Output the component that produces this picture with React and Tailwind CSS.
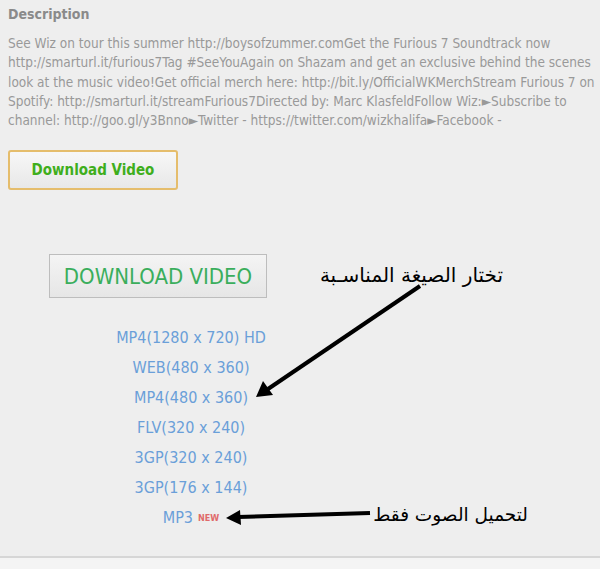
const lines = [
  'See Wiz on tour this summer http://boysofzummer.comGet the Furious 7 Soundtrack now',
  'http://smarturl.it/furious7Tag #SeeYouAgain on Shazam and get an exclusive behind the scenes',
  'look at the music video!Get official merch here: http://bit.ly/OfficialWKMerchStream Furious 7 on',
  'Spotify: http://smarturl.it/streamFurious7Directed by: Marc KlasfeldFollow Wiz:\u25BASubscribe to',
  'channel: http://goo.gl/y3Bnno\u25BATwitter - https://twitter.com/wizkhalifa\u25BAFacebook -',
];

const formats = [
  'MP4(1280 x 720) HD',
  'WEB(480 x 360)',
  'MP4(480 x 360)',
  'FLV(320 x 240)',
  '3GP(320 x 240)',
  '3GP(176 x 144)',
];

export default function App() {
  return (
    <div className="relative w-[600px] h-[569px] overflow-hidden bg-[#eeeeee] font-['DejaVu_Sans_Condensed','Liberation_Sans',sans-serif]">
      <div className="h-[556px] px-2 pt-[5px]">
        <h3 className="text-[14px] leading-[18px] font-bold text-[#8a8a8a]">Description</h3>
        <p className="mt-[11px] text-[13.5px] leading-[19.25px] text-[#999999]">
          {lines.map((l) => (
            <span key={l} className="block whitespace-nowrap">{l}</span>
          ))}
        </p>

        <button className="mt-[20px] w-[170px] h-[40px] rounded-[3px] border-2 border-[#e5bd6c] bg-gradient-to-b from-[#f7f7f7] to-[#e8e8e8] text-[15px] font-bold text-[#3fae1c]">
          Download Video
        </button>

        <button className="block ml-[41px] mt-[64px] w-[218px] h-[44px] border border-[#bdbdbd] bg-gradient-to-b from-[#f4f4f4] to-[#e6e6e6] text-[22px] text-[#3aae5c]">
          DOWNLOAD VIDEO
        </button>

        <ul className="mt-[30px] w-[366px] flex flex-col items-center gap-[10px] text-[16px] leading-[20px] text-[#6a9fd9]">
          {formats.map((f) => (
            <li key={f}>{f}</li>
          ))}
          <li className="flex items-center gap-[5px]">
            MP3 <span className="text-[9px] font-bold text-[#e06a6a]">NEW</span>
          </li>
        </ul>
      </div>
      <div className="h-[13px] border-t-2 border-[#d6d6d6] bg-[#f4f4f4]" />

      {/* annotations */}
      <div dir="rtl" className="absolute left-[300px] top-[262px] w-[203px] text-right text-[20px] leading-[26px] text-black font-['DejaVu_Sans',sans-serif]">
        تختار الصيغة المناسـبة
      </div>
      <div dir="rtl" className="absolute left-[340px] top-[503px] w-[188px] text-right text-[18.5px] leading-[24px] text-black font-['DejaVu_Sans',sans-serif]">
        لتحميل الصوت فقط
      </div>
      <svg className="absolute left-0 top-0 pointer-events-none" width="600" height="569">
        <line x1="420" y1="286" x2="268" y2="389" stroke="#000" strokeWidth="4" />
        <polygon points="256,397 263,381 273,395" fill="#000" />
        <line x1="370" y1="513" x2="238" y2="517" stroke="#000" strokeWidth="4" />
        <polygon points="226,518 240,510 241,525" fill="#000" />
      </svg>
    </div>
  );
}
